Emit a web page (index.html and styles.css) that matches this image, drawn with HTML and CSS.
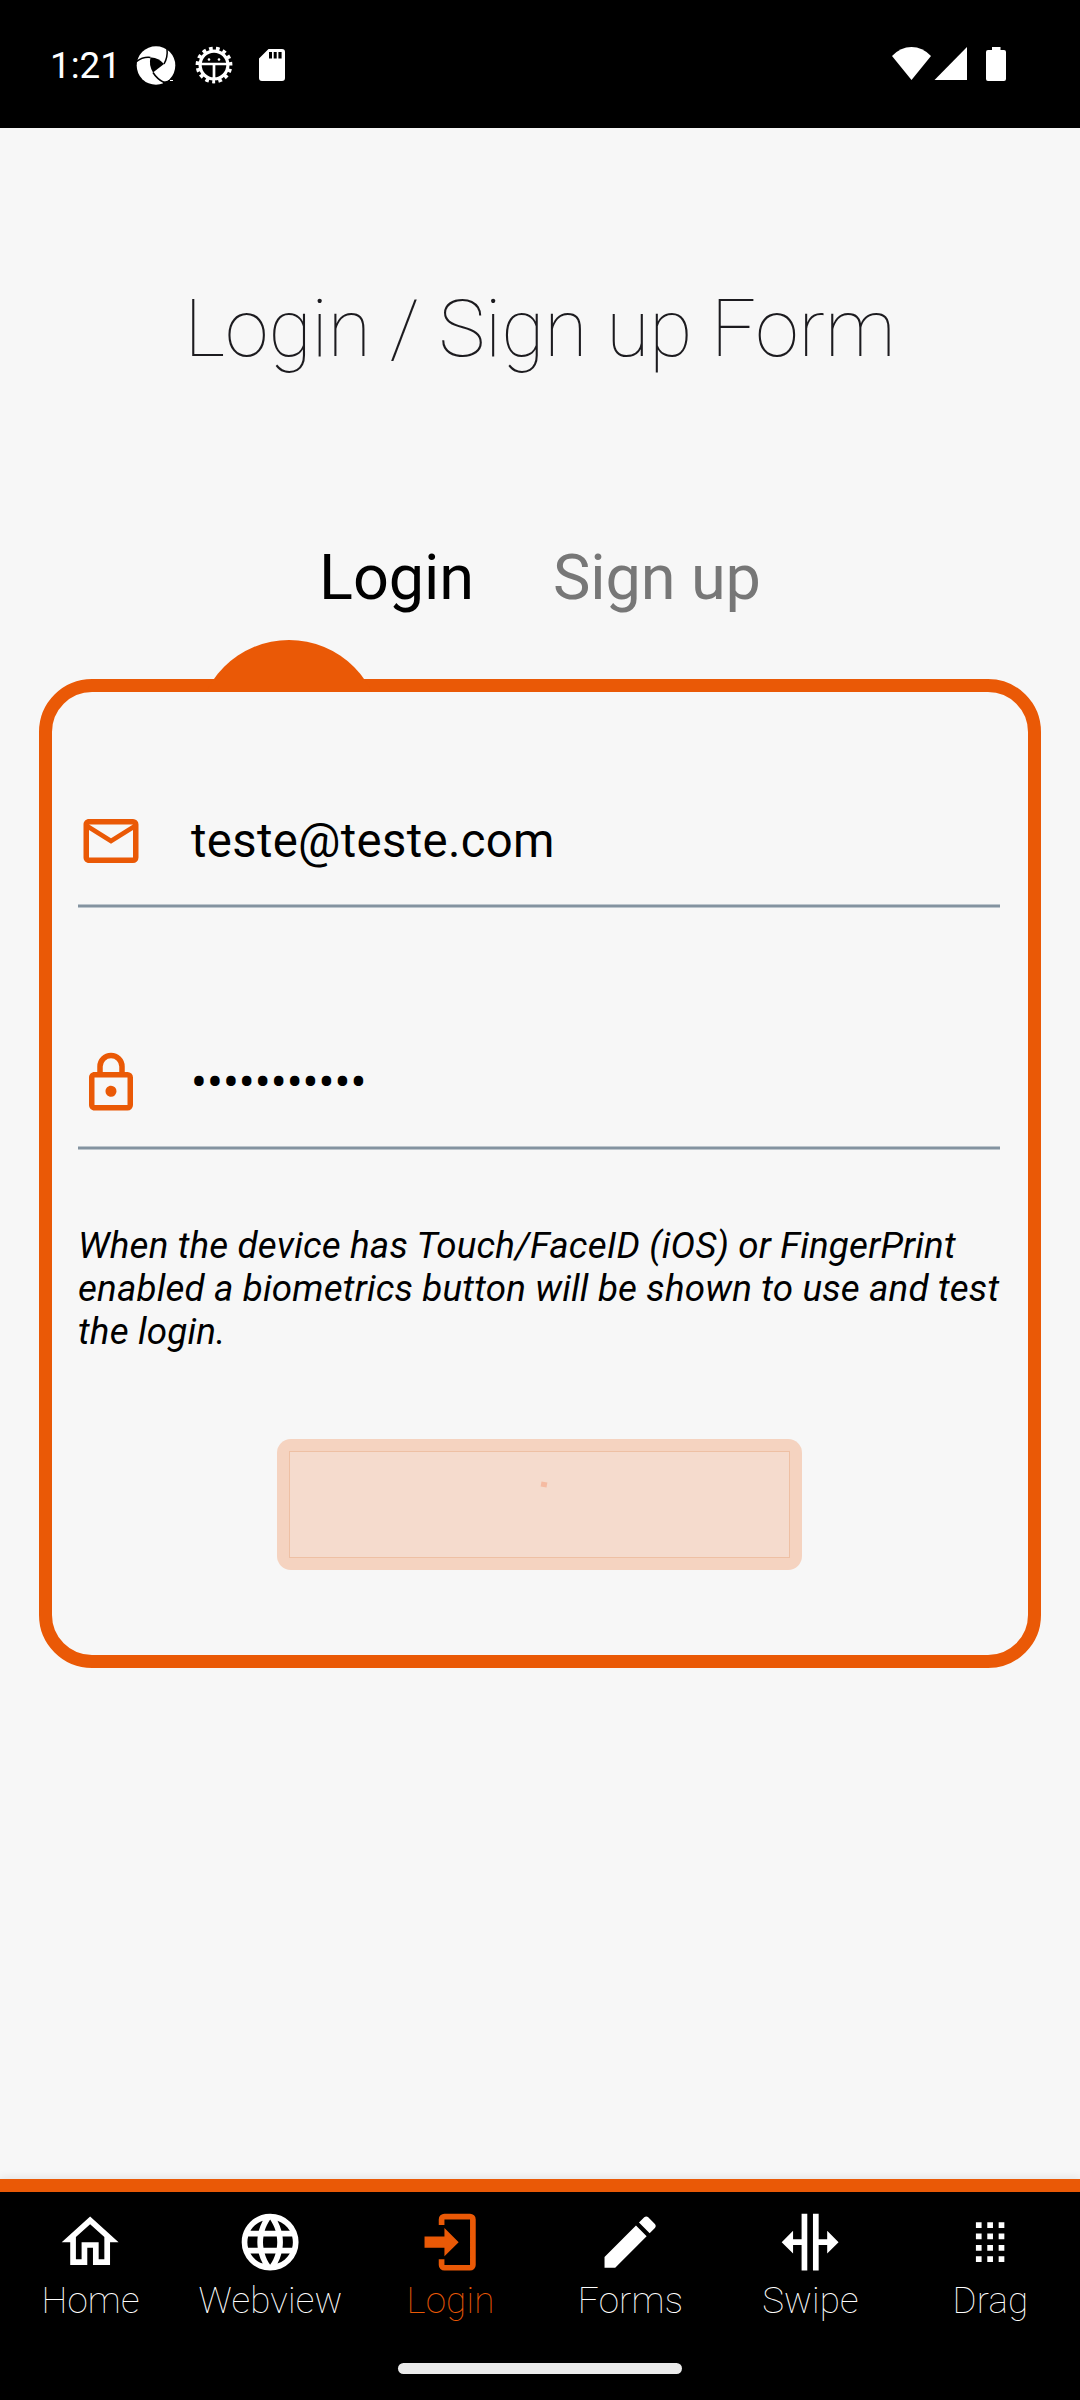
FILE: index.html
```html
<!DOCTYPE html>
<html lang="en">
<head>
<meta charset="utf-8">
<title>Login / Sign up Form</title>
<link rel="stylesheet" href="styles.css">
</head>
<body>
<div class="screen">
  <header class="status">
    <div class="status-left">
      <span class="clock">1:21</span>
      <svg class="ic-appium" viewBox="0 0 40 40" width="40" height="40">
        <circle cx="20" cy="20.500" r="19.300" fill="#fff"/>
        <path d="M14.500 12.500Q22 12 28 19L17 27.500Q12.500 20 14.500 12.500Z" fill="#000"/>
        <g fill="none" stroke="#000" stroke-width="1.500">
          <path d="M0 17Q7 11.500 14.500 12.500"/>
          <path d="M28 19Q32 12 31 4"/>
          <path d="M17 27.500Q21 34 28 37.500"/>
        </g>
        <path d="M27 36.500Q32 36.500 36 33L40 33V40H27Z" fill="#000"/>
        <path d="M34 35.500h3" stroke="#fff"/>
      </svg>
      <svg class="ic-gear" viewBox="-20 -20 40 40" width="40" height="40">
        <g fill="none" stroke="#fff">
          <circle r="13.900" stroke-width="3.200"/>
          <circle r="16.400" stroke-width="4" stroke-dasharray="3.600 3.270" stroke-dashoffset="1.800" transform="rotate(90)"/>
          <path d="M-13-1H13M0-1V13" stroke-width="2.700"/>
        </g>
        <circle cx="-5" cy="-5.500" r="1.300" fill="#fff"/>
        <circle cx="5" cy="-5.500" r="1.300" fill="#fff"/>
      </svg>
      <svg class="ic-sd" viewBox="0 0 26 32" width="26" height="32">
        <path fill="#fff" fill-rule="evenodd" d="M9.500 0H23a3 3 0 0 1 3 3V29a3 3 0 0 1-3 3H3a3 3 0 0 1-3-3V9.500ZM10 3V9.500H13V3ZM14.700 3V9.500H17.700V3ZM19.400 3V9.500H22.600V3Z"/>
      </svg>
    </div>
    <svg class="ic-system" viewBox="0 0 115 34" width="115" height="34" fill="#fff">
      <path d="M0 9Q8.500 0 19.500 0T39 9L19.500 33Z"/>
      <path d="M42.500 33L75 0V33Z"/>
      <path d="M100 0H108.500V3H112a2 2 0 0 1 2 2V32a2 2 0 0 1-2 2H96a2 2 0 0 1-2-2V5a2 2 0 0 1 2-2H100Z"/>
    </svg>
  </header>

  <main class="content">
    <h1 class="title">Login / Sign up Form</h1>
    <div class="tabs">
      <span class="tab tab-active">Login</span>
      <span class="tab">Sign up</span>
    </div>
    <section class="card">
      <div class="pointer"><div class="pointer-dot"></div></div>
      <div class="field">
        <svg class="field-icon" viewBox="0 0 24 24"><path d="M4,4H20A2,2 0 0,1 22,6V18A2,2 0 0,1 20,20H4C2.890,20 2,19.100 2,18V6C2,4.890 2.890,4 4,4M4,18H20V8L12,13L4,8V18M4,6L12,11L20,6H4Z"/></svg>
        <span class="value value-email">teste@teste.com</span>
      </div>
      <div class="field field-password">
        <svg class="field-icon" viewBox="0 0 24 24"><path d="M12,17C10.890,17 10,16.100 10,15C10,13.890 10.890,13 12,13A2,2 0 0,1 14,15A2,2 0 0,1 12,17M18,20V10H6V20H18M18,8A2,2 0 0,1 20,10V20A2,2 0 0,1 18,22H6C4.890,22 4,21.100 4,20V10C4,8.890 4.890,8 6,8H7V6A5,5 0 0,1 12,1A5,5 0 0,1 17,6V8H18M12,3A3,3 0 0,0 9,6V8H15V6A3,3 0 0,0 12,3Z"/></svg>
        <span class="value">•••••••••••</span>
      </div>
      <p class="hint">When the device has Touch/FaceID (iOS) or FingerPrint enabled a biometrics button will be shown to use and test the login.</p>
      <div class="button"><div class="button-face"><div class="button-mark"></div></div></div>
    </section>
  </main>

  <nav class="nav">
    <div class="nav-item"><svg class="nav-icon" viewBox="0 0 24 24"><path d="M12,5.690L17,10.190V18H15V12H9V18H7V10.190L12,5.690M12,3L2,12H5V20H11V14H13V20H19V12H22"/></svg><span>Home</span></div>
    <div class="nav-item"><svg class="nav-icon" viewBox="0 0 24 24"><path d="M16.360,14C16.440,13.340 16.500,12.680 16.500,12C16.500,11.320 16.440,10.660 16.360,10H19.740C19.900,10.640 20,11.310 20,12C20,12.690 19.900,13.360 19.740,14M14.590,19.560C15.190,18.450 15.650,17.250 15.970,16H18.920C17.960,17.650 16.430,18.930 14.590,19.560M14.340,14H9.660C9.560,13.340 9.500,12.680 9.500,12C9.500,11.320 9.560,10.650 9.660,10H14.340C14.430,10.650 14.500,11.320 14.500,12C14.500,12.680 14.430,13.340 14.340,14M12,19.960C11.170,18.760 10.500,17.430 10.090,16H13.910C13.500,17.430 12.830,18.760 12,19.960M8,8H5.080C6.030,6.340 7.570,5.060 9.400,4.440C8.800,5.550 8.350,6.750 8,8M5.080,16H8C8.350,17.250 8.800,18.450 9.400,19.560C7.570,18.930 6.030,17.650 5.080,16M4.260,14C4.100,13.360 4,12.690 4,12C4,11.310 4.100,10.640 4.260,10H7.640C7.560,10.660 7.500,11.320 7.500,12C7.500,12.680 7.560,13.340 7.640,14M12,4.030C12.830,5.230 13.500,6.570 13.910,8H10.090C10.500,6.570 11.170,5.230 12,4.030M18.920,8H15.970C15.650,6.750 15.190,5.550 14.590,4.440C16.430,5.070 17.960,6.340 18.920,8M12,2C6.470,2 2,6.500 2,12A10,10 0 0,0 12,22A10,10 0 0,0 22,12A10,10 0 0,0 12,2Z"/></svg><span>Webview</span></div>
    <div class="nav-item nav-active"><svg class="nav-icon" viewBox="0 0 24 24"><path d="M10,17V14H3V10H10V7L15,12L10,17M10,2H19A2,2 0 0,1 21,4V20A2,2 0 0,1 19,22H10A2,2 0 0,1 8,20V18H10V20H19V4H10V6H8V4A2,2 0 0,1 10,2Z"/></svg><span>Login</span></div>
    <div class="nav-item"><svg class="nav-icon" viewBox="0 0 24 24"><path d="M20.710,7.040C21.100,6.650 21.100,6 20.710,5.630L18.370,3.290C18,2.900 17.350,2.900 16.960,3.290L15.120,5.120L18.870,8.870M3,17.250V21H6.750L17.810,9.930L14.060,6.180L3,17.250Z"/></svg><span>Forms</span></div>
    <div class="nav-item"><svg class="nav-icon" viewBox="0 0 24 24"><path d="M2,12L6,8V11H9V2H11V22H9V13H6V16ZM22,12L18,8V11H15V2H13V22H15V13H18V16Z"/></svg><span>Swipe</span></div>
    <div class="nav-item"><svg class="nav-icon" viewBox="0 0 24 24"><path d="M7,5H9V7H7ZM11,5H13V7H11ZM15,5H17V7H15ZM7,9H9V11H7ZM11,9H13V11H11ZM15,9H17V11H15ZM7,13H9V15H7ZM11,13H13V15H11ZM15,13H17V15H15ZM7,17H9V19H7ZM11,17H13V19H11ZM15,17H17V19H15Z"/></svg><span>Drag</span></div>
  </nav>
  <footer class="gesture"><div class="handle"></div></footer>
</div>
</body>
</html>
```
FILE: styles.css
```css
* { box-sizing: border-box; }
body {
  margin: 0;
  background: #f7f7f7;
  font-family: Roboto, "Liberation Sans", sans-serif;
  color: #000;
}
.screen {
  width: 1080px;
  height: 2400px;
  display: flex;
  flex-direction: column;
  overflow: hidden;
}
.status {
  height: 128px;
  flex: none;
  background: #000;
  color: #fff;
  display: flex;
  justify-content: space-between;
  align-items: flex-start;
  padding: 45px 73px 0 50px;
}
.status-left { display: flex; }
.clock {
  width: 86px;
  font-size: 36.75px;
  line-height: 42px;
  white-space: nowrap;
}
.ic-gear { margin-left: 18px; }
.ic-sd { margin: 4px 0 0 25px; }
.ic-system { margin-top: 2px; }

.content { flex: 1; }
.title {
  margin: 155px 0 0;
  text-align: center;
  font-size: 78.75px;
  line-height: 92px;
  font-weight: 100;
  letter-spacing: -0.04px;
  color: #1c1b1f;
}
.tabs {
  display: flex;
  justify-content: center;
  gap: 79px;
  margin-top: 166px;
  font-size: 63px;
  line-height: 74px;
  letter-spacing: -0.1px;
}
.tab { color: #777; }
.tab-active { color: #000; }

.card {
  position: relative;
  margin: 64px 39px 0;
  height: 989px;
  border: 13px solid #ea5906;
  border-radius: 53px;
  padding: 84px 28px 0 26px;
}
.pointer {
  position: absolute;
  left: 145px;
  top: -52px;
  width: 184px;
  height: 52px;
  overflow: hidden;
}
.pointer-dot {
  width: 184px;
  height: 184px;
  border-radius: 50%;
  background: #ea5906;
}
.field {
  display: flex;
  align-items: center;
  height: 132px;
  padding-bottom: 2px;
  background: linear-gradient(#bcc5cc 1px, #8493a0 1px, #8493a0 3px, #bcc5cc 3px) bottom / 100% 4px no-repeat;
}
.field-icon {
  width: 66px;
  height: 66px;
  margin-right: 47px;
  fill: #ea5906;
}
.value {
  font-size: 47.25px;
  line-height: 56px;
}
.value-email { letter-spacing: 0.33px; }
.field-password { margin-top: 110px; }
.hint {
  margin: 74px 0 0;
  font-size: 36.75px;
  line-height: 43px;
  font-style: italic;
  letter-spacing: 0.17px;
  white-space: normal;
}
.button {
  width: 525px;
  height: 131px;
  margin: 86px auto 0;
  padding: 12px;
  border-radius: 14px;
  background: #f5d3c0;
}
.button-face {
  height: 107px;
  padding: 30px 0 0 251px;
  border: 1px solid #eec0a4;
  background: #f5dbcd;
}
.button-mark {
  width: 6px;
  height: 5px;
  background: #f5bba2;
  transform: rotate(10deg);
}

.nav {
  flex: none;
  height: 161px;
  display: grid;
  grid-template-columns: repeat(6, 1fr);
  background: #000;
  border-top: 13px solid #ea5906;
  box-shadow: 0 -2px 8px rgba(0, 0, 0, 0.08);
}
.nav-item {
  display: flex;
  flex-direction: column;
  align-items: center;
  padding: 16px 0 0 1px;
  color: #fff;
  fill: #fff;
  font-size: 36.75px;
  line-height: 43px;
  font-weight: 100;
  letter-spacing: 0.17px;
}
.nav-icon { width: 68.25px; height: 68.25px; flex: none; margin-bottom: 2.75px; }
.nav-active { color: #ea5906; fill: #ea5906; }
.gesture {
  flex: none;
  height: 60px;
  background: #000;
  display: flex;
  justify-content: center;
  padding-top: 23px;
}
.handle {
  width: 284px;
  height: 11px;
  border-radius: 6px;
  background: #ebebeb;
}
```
